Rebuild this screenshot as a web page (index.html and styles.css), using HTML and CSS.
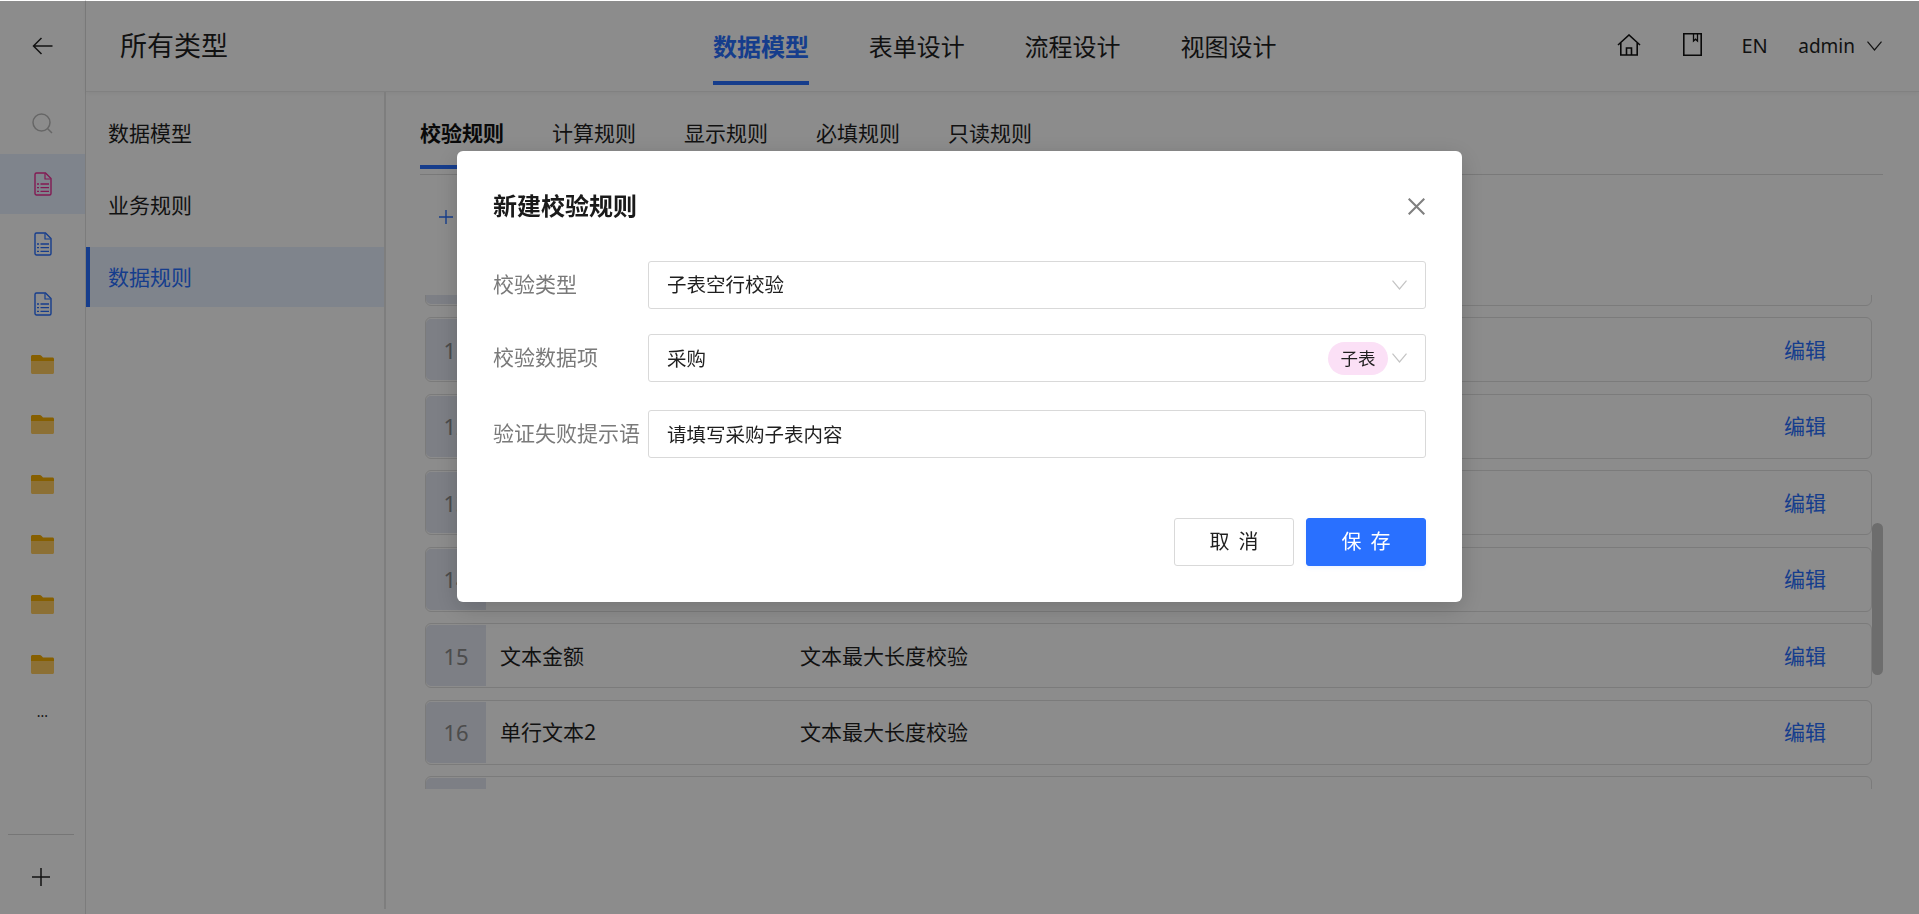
FILE: index.html
```html
<!DOCTYPE html>
<html lang="en">
<head>
    <meta charset="UTF-8">
    <meta name="viewport" content="width=device-width, initial-scale=1.0">
    <title>数据规则</title>
    <link rel="stylesheet" href="styles.css">
</head>
<body>
    <svg class="icon-defs" width="0" height="0">
        <symbol id="file" viewBox="0 0 18 24">
            <path d="M2.5 1h9L17 6.500V21.500a1.500 1.500 0 0 1-1.500 1.500h-13A1.500 1.500 0 0 1 1 21.500v-19A1.500 1.500 0 0 1 2.500 1z" fill="none" stroke="currentColor" stroke-width="1.400"/>
            <path d="M11 1.500V7h5.500" fill="none" stroke="currentColor" stroke-width="1.200"/>
            <path d="M3 12h2M6.500 12H15M3 15.700h2M6.500 15.700H15M3 19.400h2M6.500 19.400H15" fill="none" stroke="currentColor" stroke-width="1.300"/>
        </symbol>
        <symbol id="folder" viewBox="0 0 23 19">
            <path d="M1.500 0h7.200c.8 0 1.300.3 1.900.9L12 2.500h9.500c.8 0 1.500.7 1.500 1.500v3H0V1.500C0 .7.700 0 1.500 0z" fill="#f5ad00"/>
            <path d="M0 6h23v11.500c0 .8-.7 1.500-1.500 1.500h-20C.7 19 0 18.300 0 17.500z" fill="#ffcd62"/>
        </symbol>
        <symbol id="chevron" viewBox="0 0 15 10">
            <path d="M.5.700 7.500 9l7-8.300" fill="none" stroke="currentColor" stroke-width="1.200"/>
        </symbol>
    </svg>

    <div class="app">
        <aside class="rail">
            <div class="rail-back">
                <svg width="21" height="18" viewBox="0 0 21 18"><path d="M20.500 9H1.500M9.500 1 1.500 9l8 8" fill="none" stroke="#222" stroke-width="1.500"/></svg>
            </div>
            <div class="rail-search">
                <svg width="21" height="21" viewBox="0 0 21 21"><circle cx="9.500" cy="9.500" r="8.500" fill="none" stroke="#bbb" stroke-width="1.500"/><path d="M15.500 15.500 20 20" stroke="#bbb" stroke-width="1.500"/></svg>
            </div>
            <div class="rail-item active"><svg class="file-icon pink" width="18" height="24"><use href="#file"/></svg></div>
            <div class="rail-item"><svg class="file-icon" width="18" height="24"><use href="#file"/></svg></div>
            <div class="rail-item"><svg class="file-icon" width="18" height="24"><use href="#file"/></svg></div>
            <div class="rail-item"><svg width="23" height="19"><use href="#folder"/></svg></div>
            <div class="rail-item"><svg width="23" height="19"><use href="#folder"/></svg></div>
            <div class="rail-item"><svg width="23" height="19"><use href="#folder"/></svg></div>
            <div class="rail-item"><svg width="23" height="19"><use href="#folder"/></svg></div>
            <div class="rail-item"><svg width="23" height="19"><use href="#folder"/></svg></div>
            <div class="rail-item"><svg width="23" height="19"><use href="#folder"/></svg></div>
            <div class="rail-more">...</div>
            <div class="rail-foot">
                <svg width="18" height="18" viewBox="0 0 18 18"><path d="M9 0v18M0 9h18" stroke="#222" stroke-width="1.500"/></svg>
            </div>
        </aside>

        <div class="main">
            <header class="topbar">
                <div class="page-title">所有类型</div>
                <nav class="topnav">
                    <a class="topnav-item active">数据模型</a>
                    <a class="topnav-item">表单设计</a>
                    <a class="topnav-item">流程设计</a>
                    <a class="topnav-item">视图设计</a>
                </nav>
                <div class="top-actions">
                    <svg class="home-icon" width="24" height="22" viewBox="0 0 24 22">
                        <path d="M1 11 12 1l11 10M3.800 9v12h16.400V9M9.500 21v-7h5v7" fill="none" stroke="#111" stroke-width="1.600"/>
                    </svg>
                    <svg class="book-icon" width="19" height="23" viewBox="0 0 19 23">
                        <path d="M.8.800h17.400v21.400H.8z" fill="none" stroke="#111" stroke-width="1.600"/>
                        <path d="M10.500 1v7l2-1.800 2 1.800V1" fill="none" stroke="#111" stroke-width="1.300"/>
                    </svg>
                    <span class="lang">EN</span>
                    <span class="user">admin</span>
                    <svg class="user-chevron" width="15" height="10"><use href="#chevron"/></svg>
                </div>
            </header>

            <div class="body">
                <ul class="side-menu">
                    <li class="side-item">数据模型</li>
                    <li class="side-item">业务规则</li>
                    <li class="side-item active">数据规则</li>
                </ul>

                <section class="content">
                    <div class="tabs">
                        <a class="tab active">校验规则</a>
                        <a class="tab">计算规则</a>
                        <a class="tab">显示规则</a>
                        <a class="tab">必填规则</a>
                        <a class="tab">只读规则</a>
                    </div>
                    <div class="add-rule">
                        <svg width="14" height="14" viewBox="0 0 14 14"><path d="M7 0v14M0 7h14" stroke="#2970ff" stroke-width="1.400"/></svg>
                    </div>
                    <div class="rule-wrap">
                        <div class="rule-list">
                            <div class="rule-row"><span class="rule-no"></span></div>
                            <div class="rule-row"><span class="rule-no">11</span><span class="rule-name"></span><span class="rule-type"></span><a class="rule-edit">编辑</a></div>
                            <div class="rule-row"><span class="rule-no">12</span><span class="rule-name"></span><span class="rule-type"></span><a class="rule-edit">编辑</a></div>
                            <div class="rule-row"><span class="rule-no">13</span><span class="rule-name"></span><span class="rule-type"></span><a class="rule-edit">编辑</a></div>
                            <div class="rule-row"><span class="rule-no">14</span><span class="rule-name"></span><span class="rule-type"></span><a class="rule-edit">编辑</a></div>
                            <div class="rule-row"><span class="rule-no">15</span><span class="rule-name">文本金额</span><span class="rule-type">文本最大长度校验</span><a class="rule-edit">编辑</a></div>
                            <div class="rule-row"><span class="rule-no">16</span><span class="rule-name">单行文本2</span><span class="rule-type">文本最大长度校验</span><a class="rule-edit">编辑</a></div>
                            <div class="rule-row"><span class="rule-no"></span></div>
                        </div>
                        <div class="scroll-thumb"></div>
                    </div>
                </section>
            </div>
        </div>
    </div>

    <div class="mask"></div>

    <div class="modal">
        <div class="modal-head">
            <h2 class="modal-title">新建校验规则</h2>
            <svg class="modal-close" width="17" height="17" viewBox="0 0 17 17"><path d="M.7.700l15.600 15.600M16.300.700.700 16.300" stroke="#808080" stroke-width="2.100"/></svg>
        </div>
        <div class="form">
            <div class="form-row">
                <label class="form-label">校验类型</label>
                <div class="form-field">
                    <span class="field-text">子表空行校验</span>
                    <svg class="field-chevron" width="15" height="10"><use href="#chevron"/></svg>
                </div>
            </div>
            <div class="form-row low">
                <label class="form-label">校验数据项</label>
                <div class="form-field">
                    <span class="field-text">采购</span>
                    <span class="field-tag">子表</span>
                    <svg class="field-chevron" width="15" height="10"><use href="#chevron"/></svg>
                </div>
            </div>
            <div class="form-row low last">
                <label class="form-label">验证失败提示语</label>
                <div class="form-field">
                    <span class="field-text">请填写采购子表内容</span>
                </div>
            </div>
        </div>
        <div class="modal-foot">
            <button class="btn">取 消</button>
            <button class="btn btn-primary">保 存</button>
        </div>
    </div>
</body>
</html>
```

FILE: styles.css
```css
* {
    box-sizing: border-box;
    margin: 0;
    padding: 0;
}

html, body {
    height: 100%;
    overflow: hidden;
}

body {
    font-family: "Noto Sans", "Noto Sans CJK SC", sans-serif;
    font-size: 21px;
    line-height: 30px;
    color: #1f1f1f;
    background: #fff;
}

a {
    color: inherit;
    text-decoration: none;
}

ul {
    list-style: none;
}

.icon-defs {
    position: absolute;
}

.app {
    display: flex;
    height: 914px;
}

/* left rail */
.rail {
    width: 86px;
    flex: none;
    display: flex;
    flex-direction: column;
    border-right: 1px solid #e2e2e2;
}

.rail-back {
    height: 94px;
    display: flex;
    align-items: center;
    justify-content: center;
    padding-bottom: 2px;
}

.rail-search {
    height: 60px;
    display: flex;
    align-items: center;
    justify-content: center;
    padding-bottom: 2px;
}

.rail-item {
    height: 60px;
    display: flex;
    align-items: center;
    justify-content: center;
}

.rail-item.active {
    background: #e8f0ff;
}

.file-icon {
    color: #2970ff;
}

.file-icon.pink {
    color: #ee2f97;
}

.rail-more {
    height: 46px;
    text-align: center;
    font-size: 14px;
    line-height: 36px;
}

.rail-foot {
    margin: auto 11px 0 8px;
    height: 80px;
    border-top: 1px solid #d8d8d8;
    display: flex;
    align-items: center;
    justify-content: center;
    padding-top: 4px;
}

/* top bar */
.main {
    flex: 1;
    min-width: 0;
    display: flex;
    flex-direction: column;
}

.topbar {
    height: 92px;
    flex: none;
    display: flex;
    align-items: center;
    border-bottom: 1px solid #ececec;
    box-shadow: 0 1px 4px rgba(0, 0, 0, 0.05);
    padding-right: 37px;
}

.page-title {
    width: 627px;
    padding-left: 34px;
    font-size: 27px;
    line-height: 40px;
}

.topnav {
    display: flex;
    gap: 59.800px;
    align-self: stretch;
}

.topnav-item {
    font-size: 24px;
    line-height: 36px;
    padding-top: 29px;
    height: 85px;
}

.topnav-item.active {
    color: #2970ff;
    font-weight: 700;
    border-bottom: 4px solid #2970ff;
}

.top-actions {
    margin-left: auto;
    display: flex;
    align-items: center;
    font-size: 19px;
}

.home-icon {
    margin-right: 42px;
    margin-bottom: 2px;
}

.book-icon {
    margin-right: 39.500px;
    margin-bottom: 2px;
}

.lang {
    margin-right: 30.500px;
    font-size: 20px;
}

.user {
    margin-right: 12px;
}

.user-chevron {
    color: #222;
}

/* side menu + content */
.body {
    flex: 1;
    min-height: 0;
    display: flex;
}

.side-menu {
    width: 300px;
    flex: none;
    padding-top: 11px;
    margin-bottom: 5px;
    border-right: 2px solid #e6e6e6;
}

.side-item {
    height: 60px;
    margin-bottom: 12px;
    padding-left: 22px;
    line-height: 60px;
}

.side-item.active {
    background: #e8f0ff;
    color: #2970ff;
    border-left: 4px solid #2970ff;
    padding-left: 18px;
}

.content {
    flex: 1;
    min-width: 0;
    padding: 0 36px 0 34px;
}

.tabs {
    display: flex;
    gap: 48px;
    height: 83px;
    border-bottom: 1px solid #dcdcdc;
}

.tab {
    height: 77px;
    padding-top: 26px;
    line-height: 30px;
}

.tab.active {
    font-weight: 700;
    color: #111;
    border-bottom: 4px solid #2970ff;
}

.add-rule {
    height: 120px;
    padding: 26px 0 0 19px;
    color: #2970ff;
}

/* rule list, scrolled part way down */
.rule-wrap {
    position: relative;
    height: 494px;
    overflow: hidden;
}

.rule-list {
    width: 1447px;
    margin: -54.500px 0 0 5px;
    display: flex;
    flex-direction: column;
    gap: 11.500px;
}

.rule-row {
    height: 65px;
    flex: none;
    display: flex;
    align-items: center;
    padding: 1px 1px 1px 0;
    border: 1px solid #e0e0e0;
    border-radius: 6px;
}

.rule-no {
    width: 60px;
    height: 100%;
    flex: none;
    display: flex;
    align-items: center;
    justify-content: center;
    font-size: 22px;
    color: #8a8a8a;
    background: #e3e7f2;
    border-radius: 5px 0 0 5px;
}

.rule-name {
    width: 300px;
    flex: none;
    margin-left: 14px;
}

.rule-type {
    flex: 1;
}

.rule-edit {
    color: #2970ff;
    margin-right: 44px;
}

.scroll-thumb {
    position: absolute;
    left: 1452px;
    top: 228px;
    width: 11px;
    height: 152px;
    border-radius: 6px;
    background: #c6c6c6;
}

/* dialog */
.mask {
    position: fixed;
    top: 1px;
    right: 0;
    bottom: 0;
    left: 0;
    background: rgba(0, 0, 0, 0.45);
}

.modal {
    position: fixed;
    left: 457px;
    top: 151px;
    width: 1005px;
    height: 451px;
    padding: 36px 36px 37px;
    background: #fff;
    border-radius: 6px;
    box-shadow: 0 6px 24px rgba(0, 0, 0, 0.18);
}

.modal-head {
    height: 40px;
    margin-top: -1px;
    display: flex;
    align-items: center;
    justify-content: space-between;
}

.modal-title {
    font-size: 24px;
    line-height: 40px;
    font-weight: 700;
    color: #1a1a1a;
}

.modal-close {
    margin-right: 1px;
}

.form {
    margin-top: 35px;
}

.form-row {
    display: flex;
    align-items: center;
    height: 48px;
    margin-bottom: 25px;
}

.form-row.last {
    margin-top: 28px;
    margin-bottom: 0;
}

.form-row.low .field-text {
    padding-top: 2px;
}

.form-label {
    width: 155px;
    flex: none;
    padding-bottom: 2px;
    color: #7a7a7a;
    white-space: nowrap;
}

.form-field {
    flex: 1;
    height: 48px;
    display: flex;
    align-items: center;
    padding: 0 18.500px 0 18px;
    border: 1px solid #d9d9d9;
    border-radius: 3px;
    font-size: 19.500px;
}

.field-text {
    flex: 1;
    color: #1f1f1f;
}

.field-tag {
    width: 60px;
    height: 33px;
    margin-right: 3.500px;
    border-radius: 17px;
    background: #fbe0f6;
    font-size: 17.500px;
    line-height: 32px;
    text-align: center;
}

.field-chevron {
    color: #c4c4c4;
}

.modal-foot {
    margin-top: 60px;
    display: flex;
    justify-content: flex-end;
    gap: 12px;
}

.btn {
    width: 120px;
    height: 48px;
    padding-left: 2px;
    font-family: inherit;
    font-size: 20px;
    line-height: 28px;
    letter-spacing: 2px;
    color: #1f1f1f;
    background: #fff;
    border: 1px solid #d9d9d9;
    border-radius: 3px;
    cursor: pointer;
}

.btn-primary {
    color: #fff;
    background: #2970ff;
    border-color: #2970ff;
    box-shadow: 0 2px 4px rgba(41, 112, 255, 0.08);
}
```
